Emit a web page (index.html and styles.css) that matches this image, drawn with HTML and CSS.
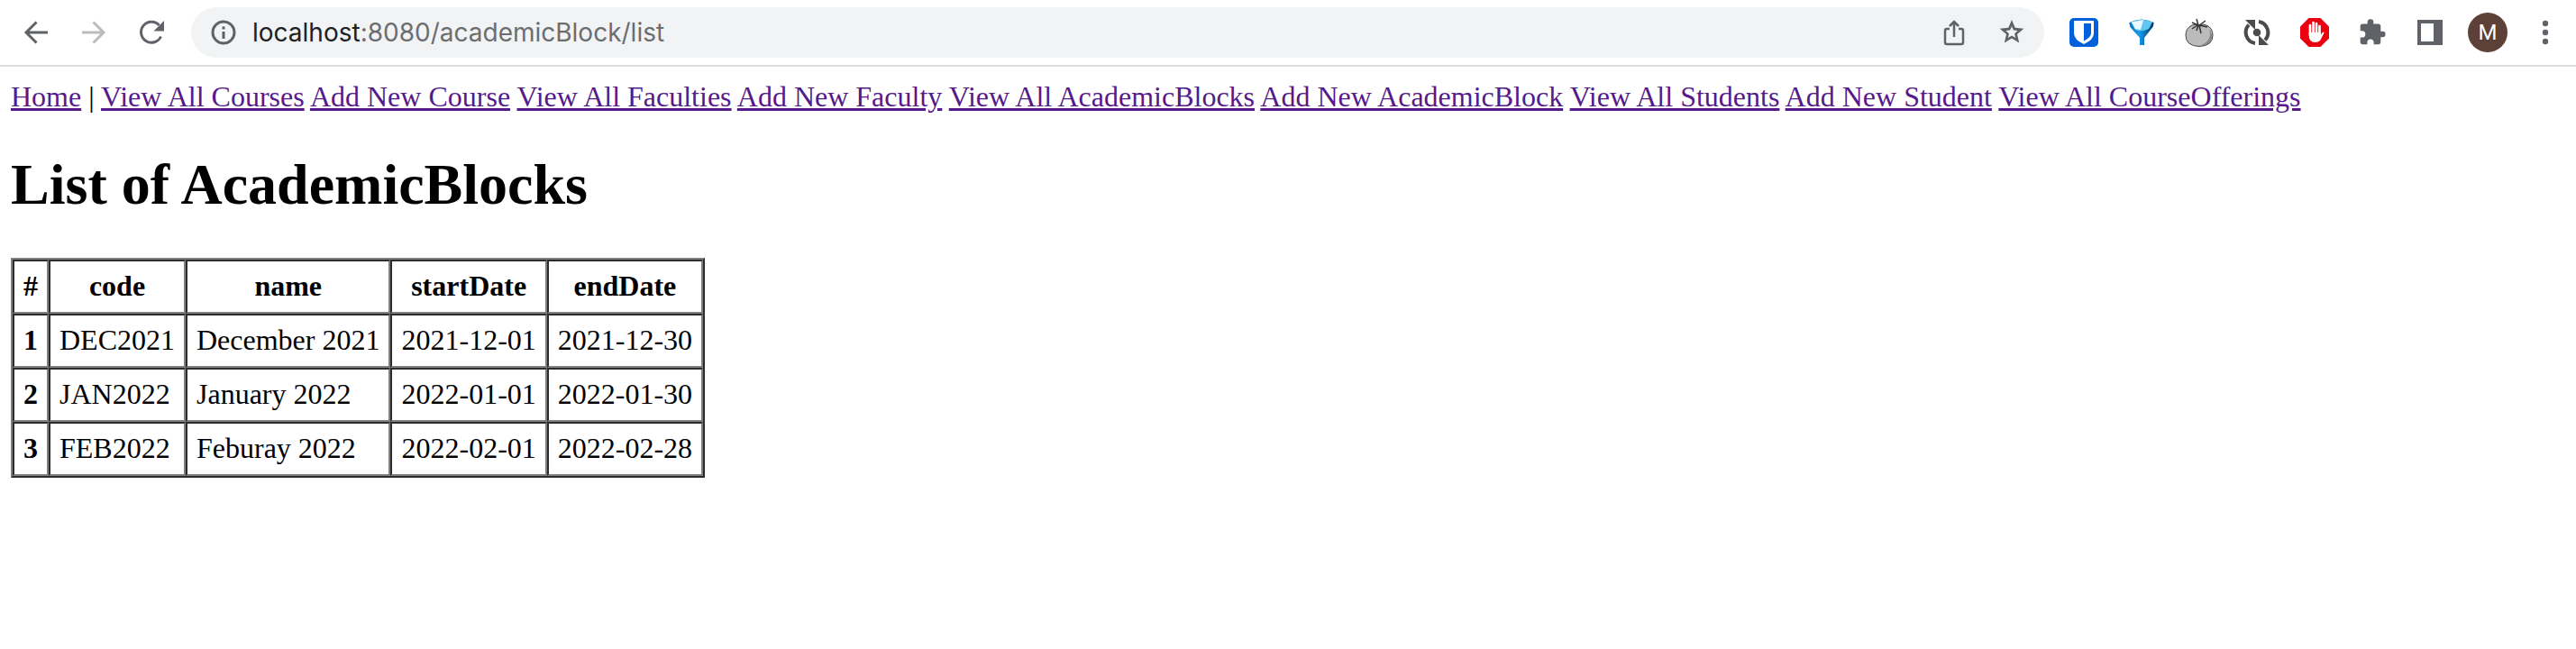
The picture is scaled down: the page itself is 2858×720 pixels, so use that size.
FILE: index.html
```html
<!DOCTYPE html>
<html lang="en">
<head>
<meta charset="utf-8">
<title>List of AcademicBlocks</title>
<link rel="stylesheet" href="styles.css">
</head>
<body>
<header class="toolbar">
  <div class="controls">
    <button class="icon-button" aria-label="Back"><svg class="icon" viewBox="0 0 32 32" fill="none" stroke="#5f6368" stroke-width="3"><path d="M29 16H5M16.500 4.500 5 16l11.500 11.500"/></svg></button>
    <button class="icon-button" aria-label="Forward" disabled><svg class="icon" viewBox="0 0 32 32" fill="none" stroke="#babcbe" stroke-width="3"><path d="M3 16h24M15.500 4.500 27 16 15.500 27.500"/></svg></button>
    <button class="icon-button" aria-label="Reload"><svg class="icon" viewBox="0 0 32 32"><path d="M26.500 20.500A11.500 11.500 0 1 1 24.500 8" fill="none" stroke="#5f6368" stroke-width="3"/><path d="M30 3v11.500H18.500z" fill="#5f6368"/></svg></button>
  </div>
  <div class="address">
    <button class="icon-button" aria-label="Site information"><svg class="icon" viewBox="0 0 32 32"><circle cx="16" cy="16" r="12" fill="none" stroke="#5f6368" stroke-width="3"/><path d="M14.500 9.500h3v3h-3zM14.500 15h3v8h-3z" fill="#5f6368"/></svg></button>
    <p class="url"><span class="host">localhost</span>:8080/academicBlock/list</p>
    <button class="icon-button" aria-label="Share"><svg class="icon" viewBox="0 0 32 32" fill="none" stroke="#5f6368" stroke-width="2.500"><path d="M11 12H8q-2 0-2 2v13q0 2 2 2h16q2 0 2-2V14q0-2-2-2h-3M16 21V4M11 9l5-5 5 5"/></svg></button>
    <button class="icon-button" aria-label="Bookmark"><svg class="icon" viewBox="0 0 32 32"><path fill="#5f6368" fill-rule="evenodd" d="m16 2 3.700 8.800 9.600.9-7.300 6.300 2.200 9.500L16 22.500l-8.200 5L10 18l-7.300-6.300 9.600-.9zm0 7.200-1.900 4.400-4.800.4 3.600 3.200-1.100 4.700 4.200-2.500 4.200 2.500-1.100-4.700 3.600-3.200-4.800-.4z"/></svg></button>
  </div>
  <div class="extensions">
    <button class="icon-button" aria-label="Password manager"><svg class="icon" viewBox="0 0 32 32"><rect width="32" height="32" rx="5" fill="#0260db"/><path d="M5 3h22v14q0 7-11 12Q5 24 5 17z" fill="#fff"/><path d="M16 6h8v11q0 4.500-8 8.500z" fill="#0260db"/></svg></button>
    <button class="icon-button" aria-label="Filter"><svg class="icon" viewBox="0 0 32 32"><defs><linearGradient id="funnel"><stop stop-color="#0670b8"/><stop offset=".4" stop-color="#159df0"/><stop offset="1" stop-color="#06315e"/></linearGradient></defs><path d="M2.500 5Q16-2 29.500 5 30 9 26 13l-7 9v8h-5v-8l-8-9Q2 9 2.500 5z" fill="url(#funnel)"/><path d="M4 4.500Q16-1 28 4.500L24 12q-8 4-15 1z" fill="#62c6f4"/><path d="m5 4.500 13-2.500-3 11-6-1z" fill="#e8f8ff"/></svg></button>
    <button class="icon-button" aria-label="Timer"><svg class="icon" viewBox="0 0 32 32"><path d="M8 8q4-2 8 0 4-2 8 0 7 3 7 11 0 12-15 12.500Q1 31 1 19 1 11 8 8z" fill="#bbb" stroke="#444"/><path d="M27 12q4 13-9 18 8 1 11-5t-2-13z" fill="#888"/><path d="M15 8 13 1M16 8l7-5M15 8 8 5M16 8l9 2M14 8l-6 4M15 8l-2 6M16 8l2 9" stroke="#333" stroke-width="1.500" fill="none"/></svg></button>
    <button class="icon-button" aria-label="Refresh timer"><svg class="icon" viewBox="0 0 32 32"><path d="M14 28A12.300 12.300 0 0 1 7 7.500M18 4a12.300 12.300 0 0 1 7 20.500" fill="none" stroke="#4b4b4b" stroke-width="4"/><path d="M3 2h11v11zM18 19v11h11z" fill="#4b4b4b"/><circle cx="16" cy="16" r="4.300" fill="#4b4b4b"/></svg></button>
    <button class="icon-button" aria-label="Content blocker"><svg class="icon" viewBox="0 0 32 32"><path d="M9.500 0h13L32 9.500v13L22.500 32h-13L0 22.500v-13z" fill="#eb0010"/><path d="M11 19V8M14.500 17V5M18 17V6M21.500 18V9" stroke="#fff" stroke-width="2.700" stroke-linecap="round"/><path d="M9.700 16h13v3l2-3q1-1 2 0l-4 8q-2 3-6 3-7 0-7-8z" fill="#fff"/></svg></button>
    <button class="icon-button" aria-label="Extensions"><svg class="icon" viewBox="0 0 32 32"><path fill="#5f6368" d="M27.300 14.700h-2V9.300q0-2.700-2.700-2.700h-5.300v-2a3.300 3.300 0 0 0-6.600 0v2H5.300q-2.600 0-2.600 2.700v5h2a3.600 3.600 0 0 1 0 7.200h-2v5q0 2.700 2.600 2.700h5.100v-2a3.600 3.600 0 0 1 7.200 0v2h5q2.700 0 2.700-2.700v-5.200h2a3.300 3.300 0 0 0 0-6.600z"/></svg></button>
    <button class="icon-button" aria-label="Side panel"><svg class="icon" viewBox="0 0 32 32"><path fill="#5f6368" fill-rule="evenodd" d="M2 2h28v28H2zM6 6v20h14V6z"/></svg></button>
    <button class="avatar" aria-label="Profile M">M</button>
    <button class="icon-button" aria-label="Menu"><svg class="icon" viewBox="0 0 32 32" fill="#5f6368"><circle cx="16" cy="6" r="3.200"/><circle cx="16" cy="16" r="3.200"/><circle cx="16" cy="26" r="3.200"/></svg></button>
  </div>
</header>
<main class="page">
  <nav class="links">
    <a href="#">Home</a> |
    <a href="#">View All Courses</a>
    <a href="#">Add New Course</a>
    <a href="#">View All Faculties</a>
    <a href="#">Add New Faculty</a>
    <a href="#">View All AcademicBlocks</a>
    <a href="#">Add New AcademicBlock</a>
    <a href="#">View All Students</a>
    <a href="#">Add New Student</a>
    <a href="#">View All CourseOfferings</a>
  </nav>
  <h1 class="title">List of AcademicBlocks</h1>
  <table class="blocks">
    <thead>
      <tr><th scope="col">#</th><th scope="col">code</th><th scope="col">name</th><th scope="col">startDate</th><th scope="col">endDate</th></tr>
    </thead>
    <tbody>
      <tr><th scope="row">1</th><td>DEC2021</td><td>December 2021</td><td>2021-12-01</td><td>2021-12-30</td></tr>
      <tr><th scope="row">2</th><td>JAN2022</td><td>January 2022</td><td>2022-01-01</td><td>2022-01-30</td></tr>
      <tr><th scope="row">3</th><td>FEB2022</td><td>Feburay 2022</td><td>2022-02-01</td><td>2022-02-28</td></tr>
    </tbody>
  </table>
</main>
</body>
</html>
```

FILE: styles.css
```css
* {
  box-sizing: border-box;
}

body {
  margin: 0;
  background: #fff;
  color: #000;
  font-family: "Liberation Serif", "Times New Roman", serif;
  font-size: 32px;
  line-height: 36px;
}

.toolbar {
  display: flex;
  align-items: center;
  gap: 28px;
  padding: 8px 18px 8px 24px;
  border-bottom: 2px solid #dcdcdd;
  font-family: Inter, "Liberation Sans", sans-serif;
}

.controls,
.extensions {
  display: flex;
  align-items: center;
  gap: 32px;
}

.icon-button {
  display: block;
  flex: none;
  padding: 0;
  border: 0;
  background: none;
}

.icon {
  display: block;
  width: 32px;
  height: 32px;
}

.address {
  display: flex;
  flex: 1;
  align-items: center;
  gap: 32px;
  height: 56px;
  padding: 0 20px;
  border-radius: 28px;
  background: #f1f3f4;
}

.url {
  flex: 1;
  margin: 0 0 0 -16px;
  color: #6b6d70;
  font-size: 28px;
}

.host {
  color: #202124;
}

.avatar {
  width: 44px;
  height: 44px;
  margin: 0 -6px;
  padding: 0;
  border: 0;
  border-radius: 50%;
  background: #5d4037;
  color: #fff;
  font-family: Roboto, sans-serif;
  font-size: 24px;
}

.page {
  padding: 15px 12px;
}

.links a {
  color: #551a8b;
}

.title {
  margin: 43px 0 44px;
  font-size: 64px;
  line-height: 74px;
}

.blocks {
  border: 2px solid;
  border-color: #808080 #2c2c2c #2c2c2c #808080;
  border-spacing: 0;
}

.blocks th,
.blocks td {
  padding: 9px 10px 11px;
  border: 2px solid;
  border-color: #2c2c2c #808080 #808080 #2c2c2c;
}
```
